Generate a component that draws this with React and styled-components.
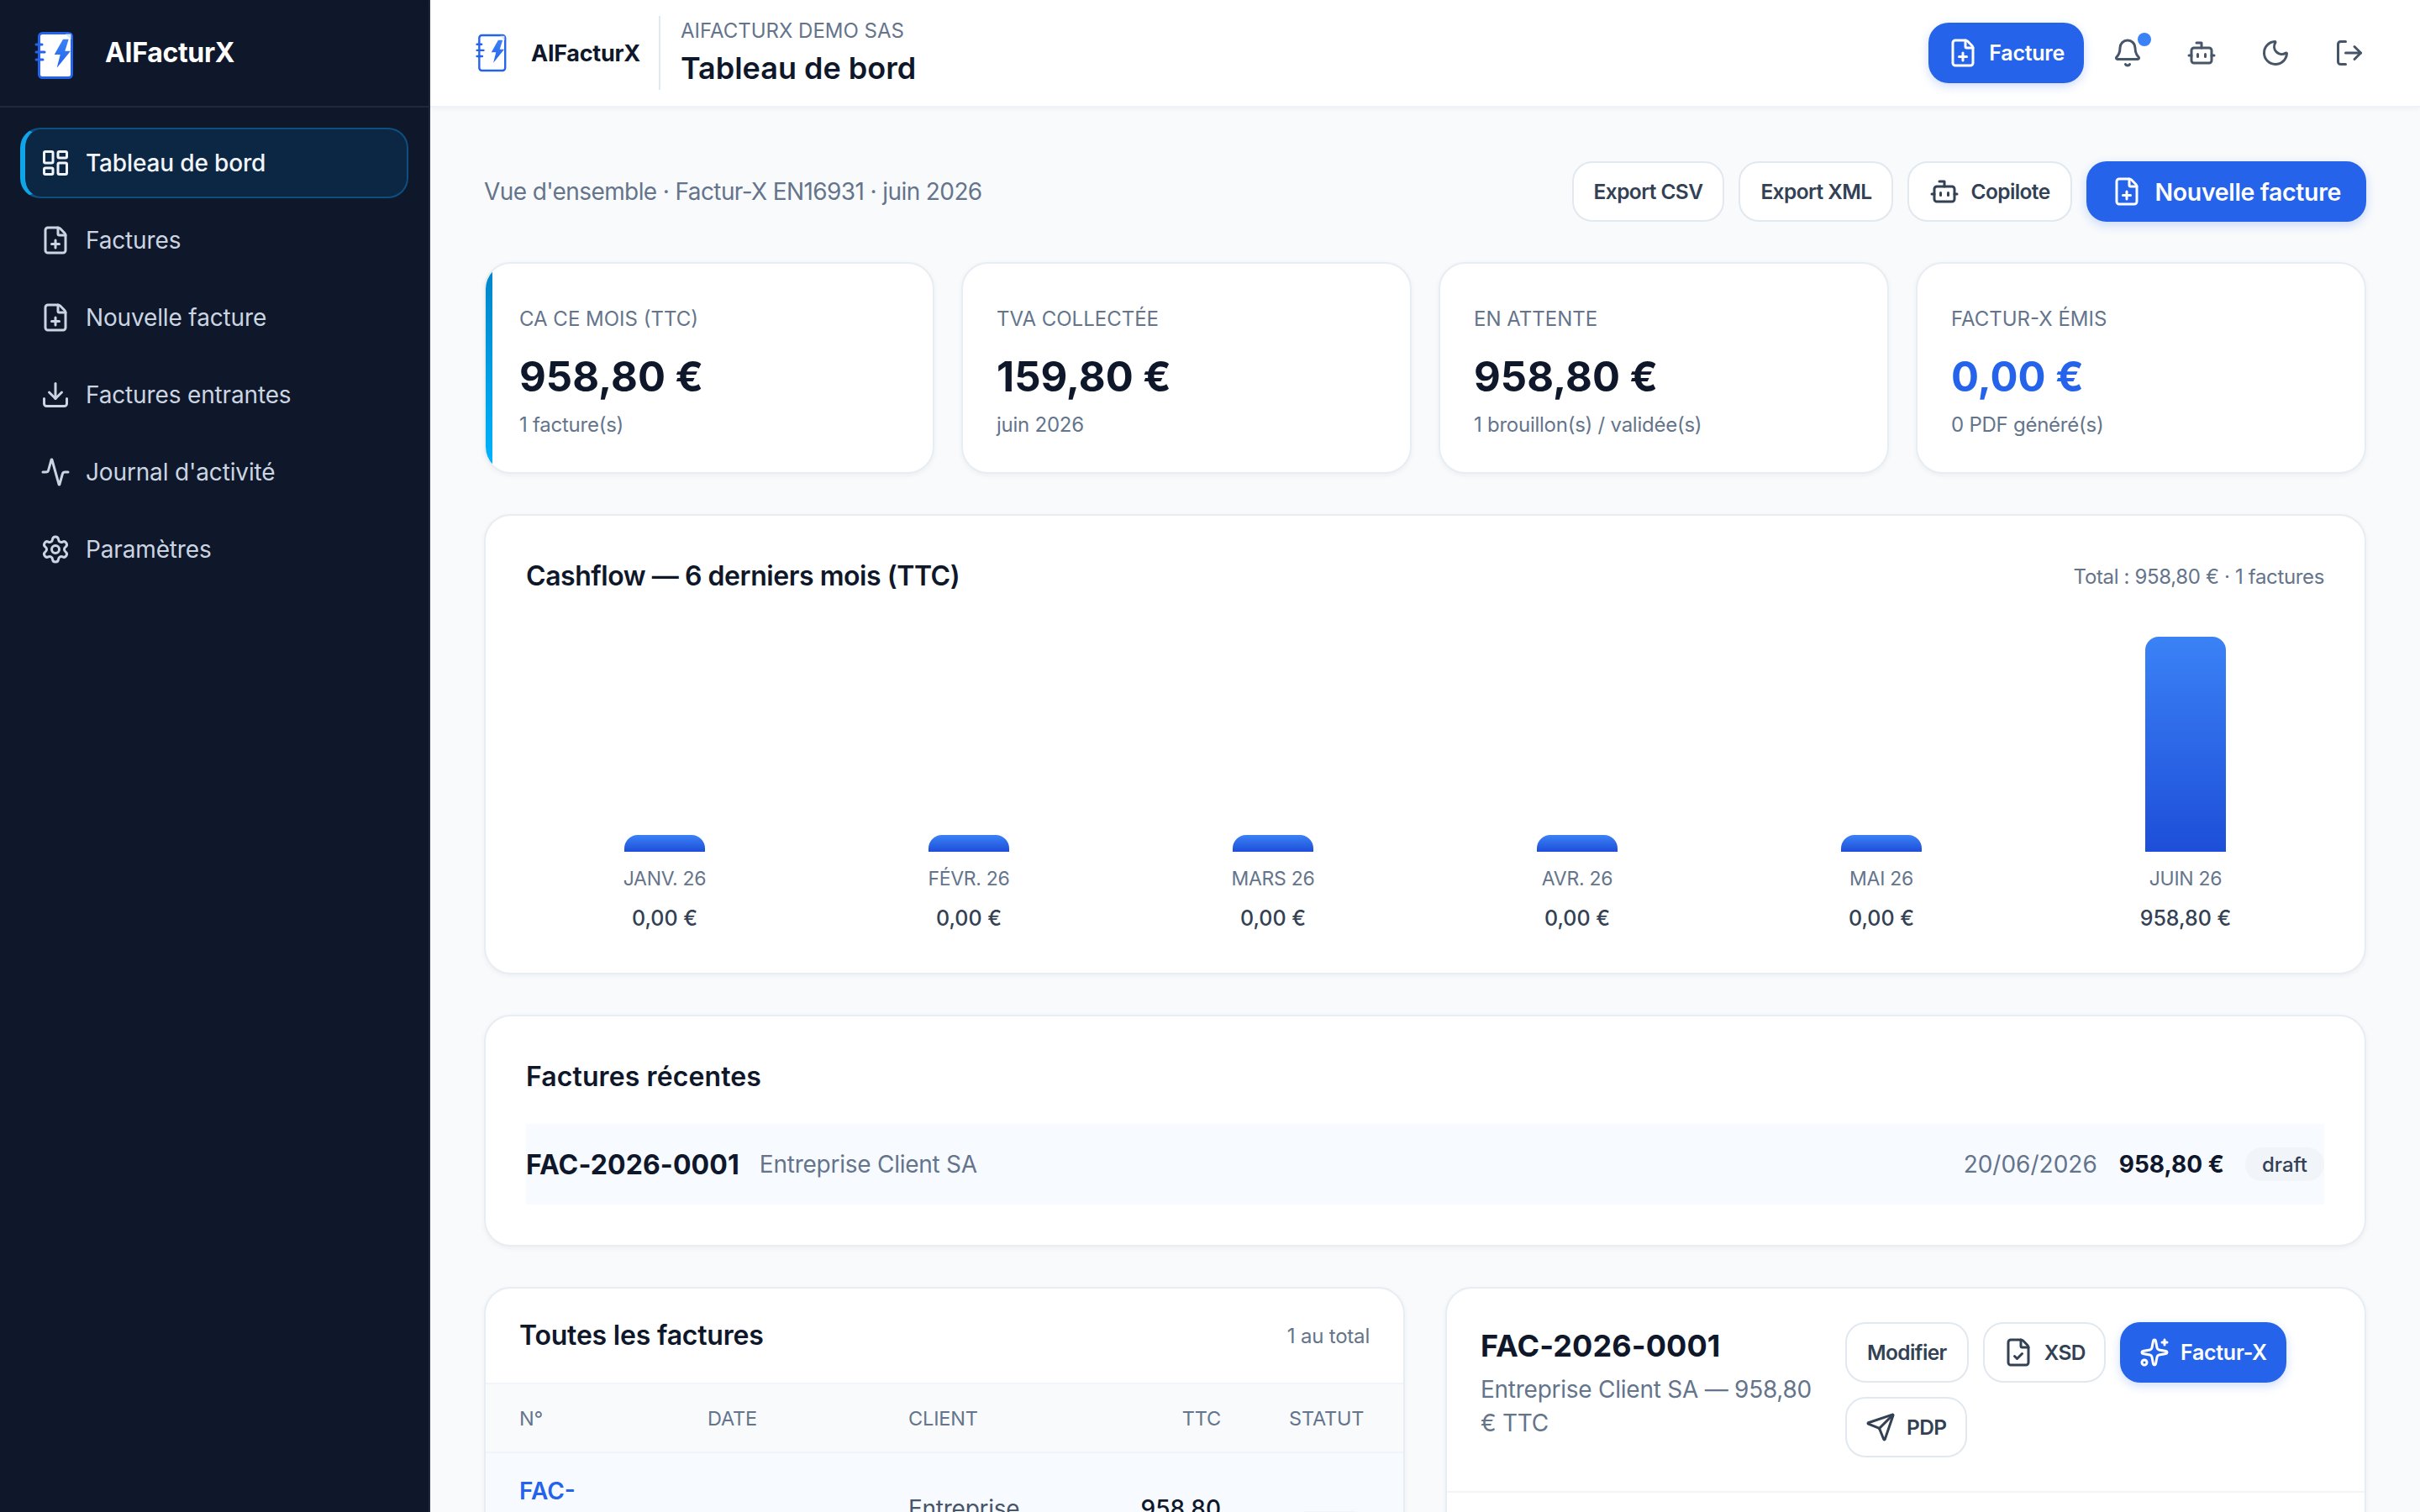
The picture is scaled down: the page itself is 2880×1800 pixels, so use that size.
import React from 'react'
import styled, {createGlobalStyle} from 'styled-components'
import {Activity, Bell, Bot, Download, FileCheck, FilePlus, LayoutDashboard, LogOut, Moon, Send, Settings, Sparkles} from 'lucide-react'

const GlobalStyle = createGlobalStyle`
    html, body {
        margin: 0;
        padding: 0;
        height: 100%;
        background: #f8fafc;
        font-family: Inter, "Liberation Sans", sans-serif;
        color: #0f172a;
    }

    * {
        box-sizing: border-box;
    }
`

const navItems = [
    {label: 'Tableau de bord', icon: LayoutDashboard, active: true},
    {label: 'Factures', icon: FilePlus},
    {label: 'Nouvelle facture', icon: FilePlus},
    {label: 'Factures entrantes', icon: Download},
    {label: "Journal d'activité", icon: Activity},
    {label: 'Paramètres', icon: Settings},
]

const stats = [
    {label: 'CA CE MOIS (TTC)', value: '958,80 €', sub: '1 facture(s)', accent: true},
    {label: 'TVA COLLECTÉE', value: '159,80 €', sub: 'juin 2026'},
    {label: 'EN ATTENTE', value: '958,80 €', sub: '1 brouillon(s) / validée(s)'},
    {label: 'FACTUR-X ÉMIS', value: '0,00 €', sub: '0 PDF généré(s)', blue: true},
]

const months = [
    {label: 'JANV. 26', value: '0,00 €', height: 20},
    {label: 'FÉVR. 26', value: '0,00 €', height: 20},
    {label: 'MARS 26', value: '0,00 €', height: 20},
    {label: 'AVR. 26', value: '0,00 €', height: 20},
    {label: 'MAI 26', value: '0,00 €', height: 20},
    {label: 'JUIN 26', value: '958,80 €', height: 256},
]

const Logo = ({small}) => (
    <LogoSvg viewBox='0 0 48 58' $small={small}>
        <defs>
            <linearGradient id={small ? 'boltA' : 'boltB'} x1='0' y1='0' x2='0' y2='1'>
                <stop offset='0' stopColor='#3b82f6'/>
                <stop offset='1' stopColor='#2563eb'/>
            </linearGradient>
        </defs>
        <rect x='5.5' y='2.5' width='39' height='53' rx='4' fill='#fff' stroke='#2563eb' strokeWidth='3'/>
        <polygon points='37,3.5 43.5,3.5 43.5,10' fill='#dbe4f0'/>
        <path d='M2 16h7M2 25h10M2 34h8' stroke='#2563eb' strokeWidth='3' strokeLinecap='round'/>
        <polygon points='34,9.7 40.7,9.7 36.3,23.7 43,23.7 26.7,43.7 30.7,28 23.7,28' fill={`url(#${small ? 'boltA' : 'boltB'})`}/>
    </LogoSvg>
)

const App = () => {
    return (
        <Page>
            <GlobalStyle/>
            <Sidebar>
                <SidebarBrand>
                    <Logo/>
                    <SidebarBrandName>AIFacturX</SidebarBrandName>
                </SidebarBrand>
                <Nav>
                    {navItems.map(({label, icon: Icon, active}) => (
                        <NavItem key={label} $active={active}>
                            <Icon size={36}/>
                            {label}
                        </NavItem>
                    ))}
                </Nav>
            </Sidebar>
            <Main>
                <TopBar>
                    <TopBrand>
                        <Logo small/>
                        <TopBrandName>AIFacturX</TopBrandName>
                    </TopBrand>
                    <TopTitles>
                        <Company>AIFACTURX DEMO SAS</Company>
                        <PageTitle>Tableau de bord</PageTitle>
                    </TopTitles>
                    <TopActions>
                        <PrimaryButton>
                            <FilePlus size={36}/>
                            Facture
                        </PrimaryButton>
                        <IconButton>
                            <Bell size={36}/>
                            <NotifDot/>
                        </IconButton>
                        <IconButton><Bot size={36}/></IconButton>
                        <IconButton><Moon size={36}/></IconButton>
                        <IconButton><LogOut size={36}/></IconButton>
                    </TopActions>
                </TopBar>
                <Content>
                    <Intro>
                        <IntroText>Vue d'ensemble · Factur-X EN16931 · juin 2026</IntroText>
                        <IntroActions>
                            <GhostButton>Export CSV</GhostButton>
                            <GhostButton>Export XML</GhostButton>
                            <GhostButton><Bot size={36}/>Copilote</GhostButton>
                            <PrimaryButton $large><FilePlus size={36}/>Nouvelle facture</PrimaryButton>
                        </IntroActions>
                    </Intro>

                    <StatGrid>
                        {stats.map(s => (
                            <StatCard key={s.label} $accent={s.accent}>
                                <StatLabel>{s.label}</StatLabel>
                                <StatValue $blue={s.blue}>{s.value}</StatValue>
                                <StatSub>{s.sub}</StatSub>
                            </StatCard>
                        ))}
                    </StatGrid>

                    <ChartCard>
                        <ChartHead>
                            <ChartTitle>Cashflow — 6 derniers mois (TTC)</ChartTitle>
                            <ChartTotal>Total : 958,80 € · 1 factures</ChartTotal>
                        </ChartHead>
                        <Bars>
                            {months.map(m => (
                                <BarColumn key={m.label}>
                                    <Bar style={{height: m.height}}/>
                                    <BarLabel>{m.label}</BarLabel>
                                    <BarValue>{m.value}</BarValue>
                                </BarColumn>
                            ))}
                        </Bars>
                    </ChartCard>

                    <RecentCard>
                        <RecentTitle>Factures récentes</RecentTitle>
                        <RecentRow>
                            <RecentNumber>FAC-2026-0001</RecentNumber>
                            <RecentClient>Entreprise Client SA</RecentClient>
                            <RecentDate>20/06/2026</RecentDate>
                            <RecentAmount>958,80 €</RecentAmount>
                            <Badge>draft</Badge>
                        </RecentRow>
                    </RecentCard>

                    <Columns>
                        <PanelCard>
                            <PanelHead>
                                <CardTitle>Toutes les factures</CardTitle>
                                <PanelCount>1 au total</PanelCount>
                            </PanelHead>
                            <TableHead>
                                <span>N°</span>
                                <span>DATE</span>
                                <span>CLIENT</span>
                                <TtcHead>TTC</TtcHead>
                                <StatusHead>STATUT</StatusHead>
                            </TableHead>
                            <TableRow>
                                <InvoiceLink>FAC-<br/>2026-<br/>0001</InvoiceLink>
                                <CellMuted>20/06/2026</CellMuted>
                                <CellClient>Entreprise Client SA</CellClient>
                                <CellAmount>958,80 €</CellAmount>
                                <StatusCell><Badge>draft</Badge></StatusCell>
                            </TableRow>
                        </PanelCard>

                        <PanelCard>
                            <DetailHead>
                                <DetailInfo>
                                    <DetailNumber>FAC-2026-0001</DetailNumber>
                                    <DetailClient>Entreprise Client SA — 958,80 € TTC</DetailClient>
                                </DetailInfo>
                                <DetailActions>
                                    <GhostButton>Modifier</GhostButton>
                                    <GhostButton $compact><FileCheck size={36}/>XSD</GhostButton>
                                    <PrimaryButton><Sparkles size={36}/>Factur-X</PrimaryButton>
                                    <GhostButton $compact><Send size={36}/>PDP</GhostButton>
                                </DetailActions>
                            </DetailHead>
                        </PanelCard>
                    </Columns>
                </Content>
            </Main>
        </Page>
    )
}

export default App


const Page = styled.div`
    display: flex;
    height: 100vh;
    overflow: hidden;
`

const LogoSvg = styled.svg`
    flex: none;
    width: ${props => props.$small ? '38px' : '48px'};
    height: ${props => props.$small ? '46px' : '58px'};
`

const Sidebar = styled.aside`
    flex: none;
    width: 512px;
    background: #0f172a;
    border-right: 2px solid #1e293b;
`

const SidebarBrand = styled.div`
    display: flex;
    align-items: center;
    gap: 36px;
    height: 128px;
    padding: 6px 0 0 41px;
    border-bottom: 2px solid #1e293b;
`

const SidebarBrandName = styled.div`
    margin-top: -8px;
    font-size: 32px;
    font-weight: 700;
    letter-spacing: -0.01em;
    color: #fff;
`

const Nav = styled.nav`
    display: flex;
    flex-direction: column;
    gap: 8px;
    padding: 24px;
`

const NavItem = styled.a`
    display: flex;
    align-items: center;
    gap: 18px;
    height: 84px;
    padding-left: 18px;
    border-radius: 24px;
    border: 2px solid ${props => props.$active ? '#0e4f7f' : 'transparent'};
    border-left: 6px solid ${props => props.$active ? '#0ea5e9' : 'transparent'};
    background: ${props => props.$active ? '#0c2744' : 'transparent'};
    color: ${props => props.$active ? '#f1f5f9' : '#cbd5e1'};
    font-size: 28px;
    letter-spacing: -.15px;
    font-weight: ${props => props.$active ? 500 : 400};
`

const Main = styled.div`
    flex: 1;
    min-width: 0;
    display: flex;
    flex-direction: column;
`

const TopBar = styled.header`
    flex: none;
    display: flex;
    align-items: center;
    height: 128px;
    padding: 0 48px;
    background: #fff;
    border-bottom: 2px solid #eef1f5;
    box-shadow: 0 2px 4px rgba(15, 23, 42, .04);
    position: relative;
`

const TopBrand = styled.div`
    display: flex;
    align-items: center;
    gap: 28px;
    height: 88px;
    padding: 0 22px 0 6px;
    border-right: 2px solid #e2e8f0;
`

const TopBrandName = styled.div`
    font-size: 27px;
    font-weight: 700;
    letter-spacing: -0.01em;
    color: #0f172a;
`

const TopTitles = styled.div`
    display: flex;
    flex-direction: column;
    gap: 4px;
    margin-top: -3px;
    padding-left: 24px;
`

const Company = styled.div`
    font-size: 24px;
    line-height: 34px;
    color: #64748b;
`

const PageTitle = styled.div`
    font-size: 36px;
    line-height: 46px;
    font-weight: 600;
    color: #0f172a;
`

const TopActions = styled.div`
    display: flex;
    align-items: center;
    gap: 16px;
    margin-left: auto;
`

const PrimaryButton = styled.button`
    display: inline-flex;
    align-items: center;
    justify-content: center;
    gap: ${props => props.$large ? '16px' : '13px'};
    height: 72px;
    padding: 0 ${props => props.$large ? '30px' : '23px'};
    border: 0;
    border-radius: 24px;
    background: #2563eb;
    color: #fff;
    font-family: inherit;
    font-size: ${props => props.$large ? '28.5px' : '25px'};
    letter-spacing: ${props => props.$large ? '-.35px' : '-.25px'};
    font-weight: 600;
    box-shadow: 0 4px 12px rgba(37, 99, 235, .22);
`

const GhostButton = styled.button`
    display: inline-flex;
    align-items: center;
    justify-content: center;
    gap: 13px;
    height: 72px;
    padding: 0 ${props => props.$compact ? '22px' : '24px'};
    border: 2px solid #e2e8f0;
    border-radius: 24px;
    background: #fff;
    color: #334155;
    font-family: inherit;
    font-size: 24.5px;
    letter-spacing: -.6px;
    font-weight: 600;
`

const IconButton = styled.button`
    position: relative;
    display: flex;
    align-items: center;
    justify-content: center;
    width: 72px;
    height: 72px;
    padding: 0;
    border: 0;
    background: transparent;
    color: #475569;
`

const NotifDot = styled.span`
    position: absolute;
    top: 12px;
    right: 8px;
    width: 16px;
    height: 16px;
    border-radius: 50%;
    background: #3b82f6;
`

const Content = styled.main`
    flex: 1;
    display: flex;
    flex-direction: column;
    gap: 48px;
    padding: 64px;
    overflow: hidden;
`

const Intro = styled.div`
    flex: none;
    display: flex;
    align-items: center;
    justify-content: space-between;
`

const IntroText = styled.div`
    font-size: 28px;
    letter-spacing: -.6px;
    color: #64748b;
`

const IntroActions = styled.div`
    display: flex;
    align-items: center;
    gap: 17px;
`

const StatGrid = styled.div`
    flex: none;
    display: grid;
    grid-template-columns: repeat(4, 1fr);
    gap: 32px;
`

const Card = styled.section`
    flex: none;
    background: #fff;
    border: 2px solid #e8edf4;
    border-radius: 32px;
    box-shadow: 0 2px 6px rgba(15, 23, 42, .05);
`

const StatCard = styled(Card)`
    position: relative;
    height: 252px;
    padding: 48px 40px 0;
    overflow: hidden;

    &::before {
        content: "";
        display: ${props => props.$accent ? 'block' : 'none'};
        position: absolute;
        top: 0;
        bottom: 0;
        left: 0;
        width: 8px;
        background: linear-gradient(180deg, #0284c7, #00b4ff);
    }
`

const StatLabel = styled.div`
    font-size: 24px;
    line-height: 36px;
    color: #64748b;
`

const StatValue = styled.div`
    margin-top: 19px;
    font-size: 49px;
    line-height: 64px;
    font-weight: 700;
    color: ${props => props.$blue ? '#2563eb' : '#0f172a'};
`

const StatSub = styled.div`
    margin-top: 7px;
    font-size: 24px;
    line-height: 36px;
    letter-spacing: -.25px;
    color: #64748b;
`

const ChartCard = styled(Card)`
    height: 548px;
    padding: 48px 48px 0;
`

const ChartHead = styled.div`
    display: flex;
    align-items: center;
    justify-content: space-between;
`

const CardTitle = styled.h2`
    margin: 0;
    font-size: 32px;
    line-height: 48px;
    letter-spacing: -.2px;
    font-weight: 600;
    color: #0f172a;
`

const ChartTitle = styled(CardTitle)`
    letter-spacing: -.45px;
`

const RecentTitle = styled(CardTitle)`
    letter-spacing: .1px;
`

const ChartTotal = styled.div`
    font-size: 24px;
    letter-spacing: -.35px;
    color: #64748b;
`

const Bars = styled.div`
    display: grid;
    grid-template-columns: repeat(6, 1fr);
    gap: 32px;
    height: 330px;
    margin-top: 48px;
    align-items: end;
`

const BarColumn = styled.div`
    display: flex;
    flex-direction: column;
    align-items: center;
`

const Bar = styled.div`
    width: 96px;
    border-radius: 16px 16px 0 0;
    background: linear-gradient(180deg, #3b82f6, #1d4ed8);
`

const BarLabel = styled.div`
    margin-top: 14px;
    font-size: 23px;
    line-height: 36px;
    letter-spacing: -.3px;
    color: #64748b;
`

const BarValue = styled.div`
    margin-top: 11px;
    font-size: 25px;
    line-height: 36px;
    font-weight: 500;
    color: #334155;
`

const RecentCard = styled(Card)`
    height: 276px;
    padding: 48px 48px 0;
`

const RecentRow = styled.div`
    display: flex;
    align-items: center;
    height: 96px;
    margin-top: 32px;
    background: #f7faff;
`

const RecentNumber = styled.div`
    font-size: 32px;
    letter-spacing: .1px;
    font-weight: 700;
    color: #0f172a;
`

const RecentClient = styled.div`
    margin-left: 24px;
    font-size: 28px;
    letter-spacing: -.25px;
    color: #64748b;
`

const RecentDate = styled.div`
    margin-left: auto;
    font-size: 28px;
    color: #64748b;
`

const RecentAmount = styled.div`
    margin-left: 26px;
    font-size: 28px;
    font-weight: 700;
    color: #0f172a;
`

const Badge = styled.span`
    display: inline-flex;
    align-items: center;
    height: 40px;
    margin-left: 25px;
    padding: 0 20px;
    border-radius: 20px;
    background: #f1f5f9;
    color: #334155;
    font-size: 24px;
    font-weight: 500;
`

const Columns = styled.div`
    flex: none;
    display: grid;
    grid-template-columns: 1fr 1fr;
    gap: 48px;
`

const PanelCard = styled(Card)`
    min-height: 700px;
    overflow: hidden;
`

const PanelHead = styled.div`
    display: flex;
    align-items: center;
    justify-content: space-between;
    height: 114px;
    padding: 0 40px;
    border-bottom: 2px solid #f1f5f9;
`

const PanelCount = styled.div`
    font-size: 24px;
    letter-spacing: -.2px;
    color: #64748b;
`

const TableHead = styled.div`
    display: grid;
    grid-template-columns: 224px 239px 200px 172px 177px;
    align-items: center;
    height: 82px;
    padding: 0 40px;
    background: #f8fafc;
    border-bottom: 2px solid #f1f5f9;
    font-size: 23.5px;
    letter-spacing: -.15px;
    color: #64748b;
`

const TtcHead = styled.span`
    text-align: right;
`

const StatusHead = styled.span`
    padding-left: 81px;
`

const TableRow = styled.div`
    display: grid;
    grid-template-columns: 224px 239px 200px 172px 177px;
    align-items: center;
    padding: 24px 40px;
    background: #f7faff;
    font-size: 28px;
    line-height: 42px;
`

const InvoiceLink = styled.a`
    font-weight: 600;
    color: #2563eb;
`

const CellMuted = styled.span`
    color: #64748b;
`

const CellClient = styled.span`
    letter-spacing: -.25px;
    color: #475569;
`

const CellAmount = styled.span`
    padding-left: 72px;
    text-align: right;
    font-weight: 500;
    color: #0f172a;
`

const StatusCell = styled.span`
    padding-left: 58px;
`

const DetailHead = styled.div`
    display: grid;
    grid-template-columns: 402px 1fr;
    gap: 32px;
    padding: 40px;
    border-bottom: 2px solid #f1f5f9;
`

const DetailInfo = styled.div`
    min-width: 0;
`

const DetailNumber = styled.div`
    margin-top: 4px;
    font-size: 36px;
    letter-spacing: .1px;
    line-height: 48px;
    font-weight: 700;
    color: #0f172a;
`

const DetailClient = styled.div`
    margin-top: 8px;
    font-size: 28px;
    letter-spacing: -.25px;
    line-height: 40px;
    color: #64748b;
`

const DetailActions = styled.div`
    display: flex;
    flex-wrap: wrap;
    align-content: flex-start;
    gap: 17px;
`
